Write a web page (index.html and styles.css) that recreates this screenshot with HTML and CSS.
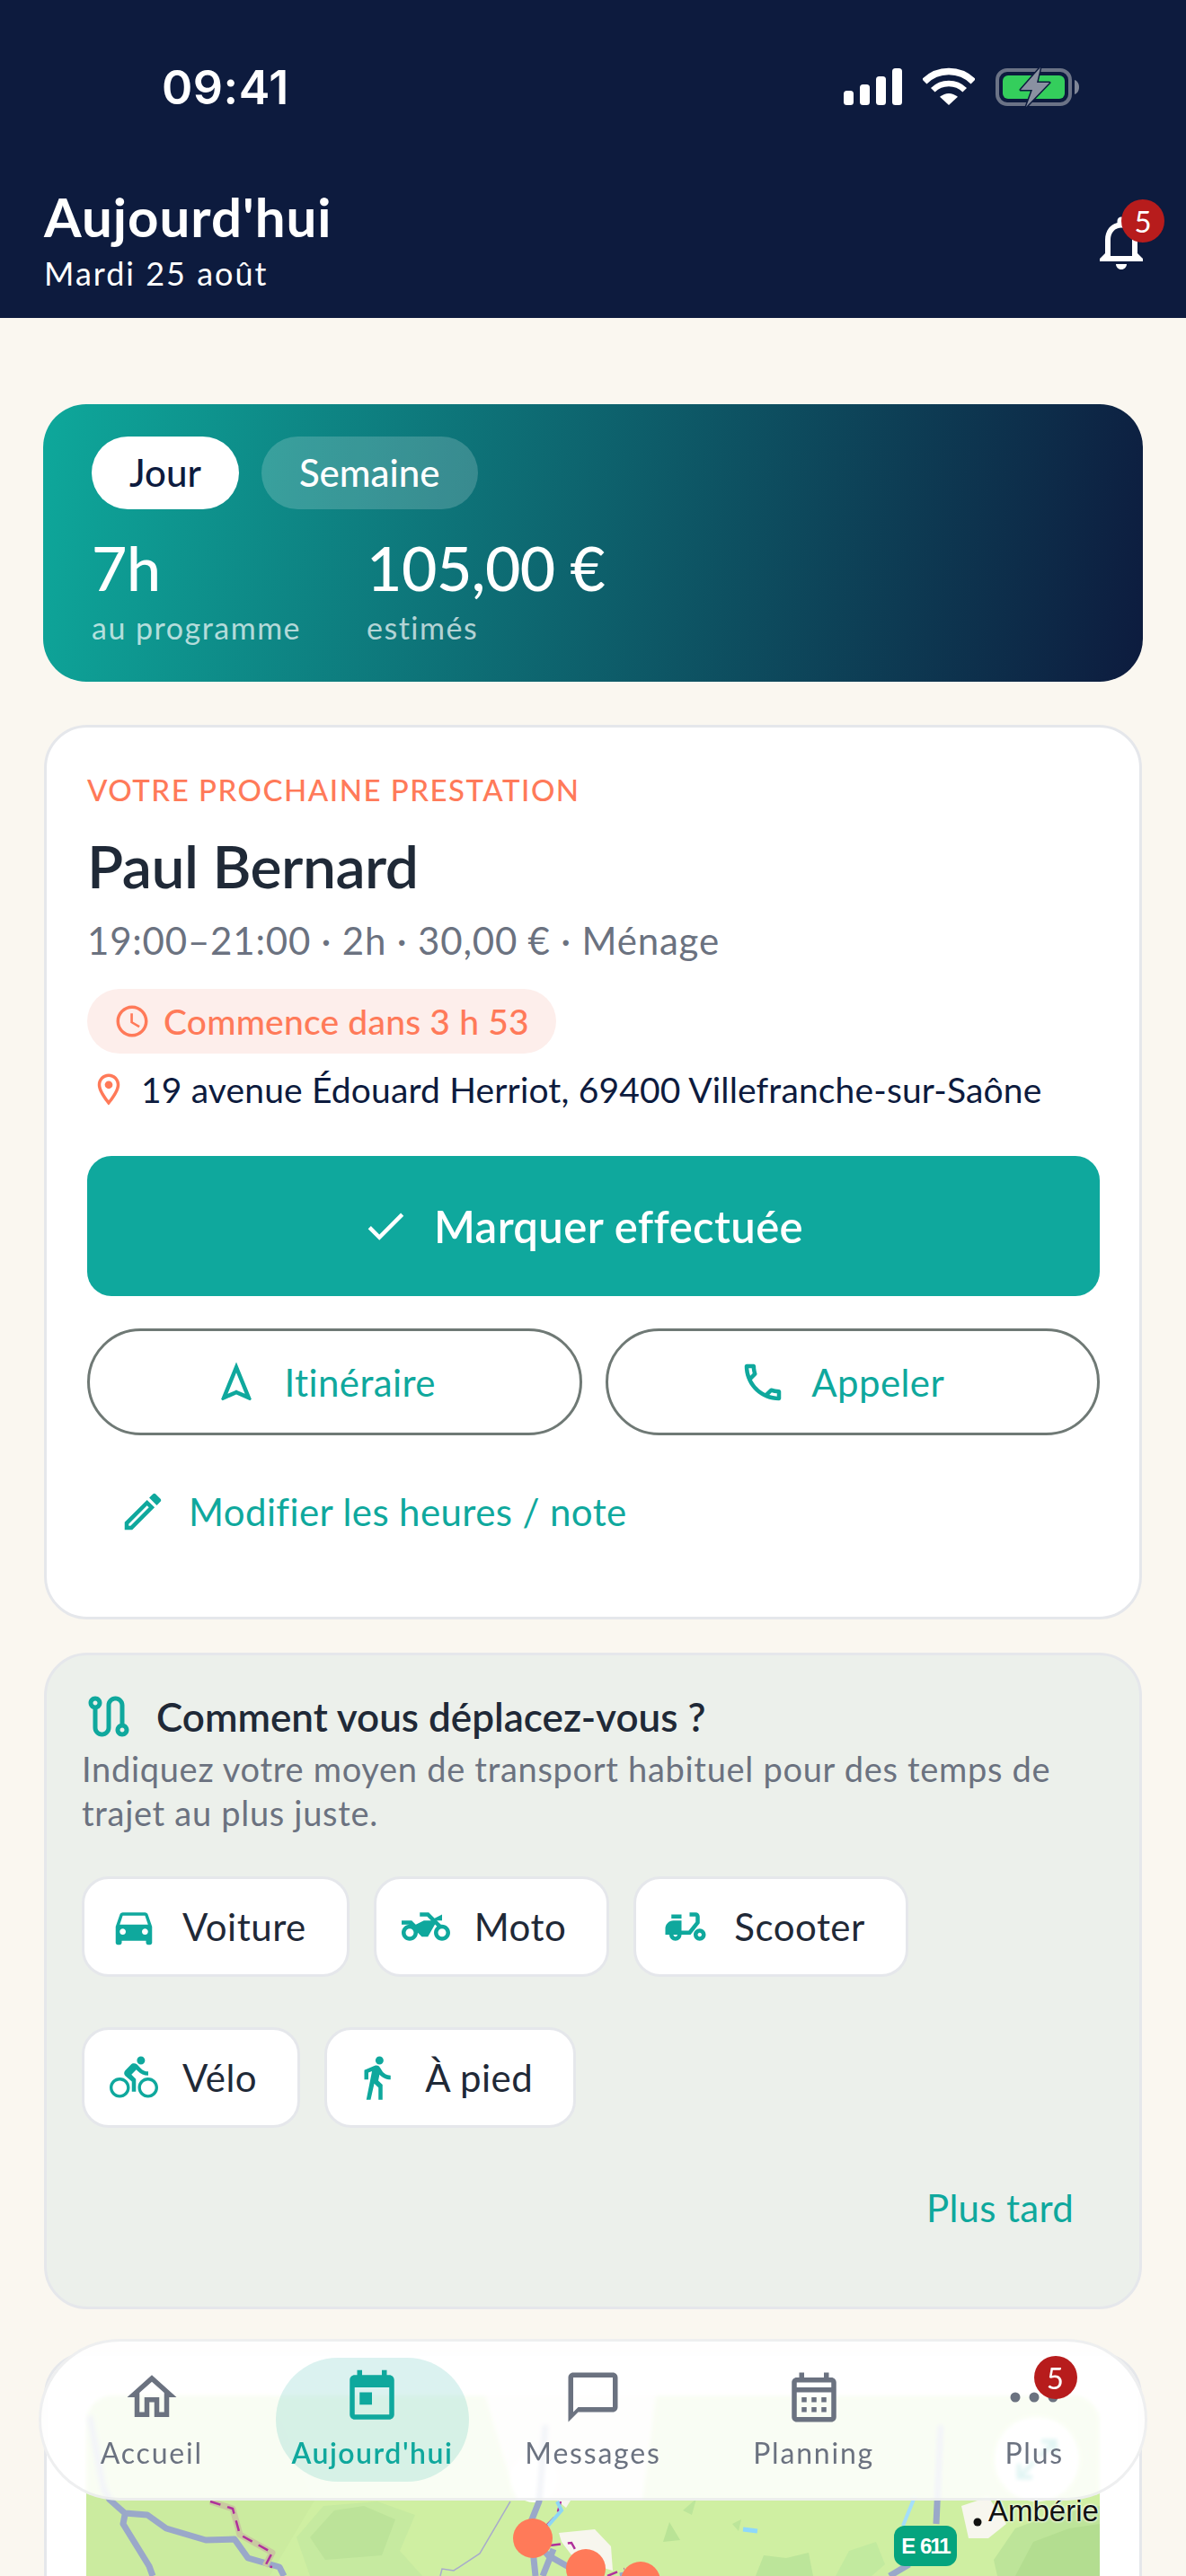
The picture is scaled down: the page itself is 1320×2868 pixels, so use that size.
FILE: index.html
```html
<!DOCTYPE html>
<html lang="fr">
<head>
<meta charset="utf-8">
<title>Aujourd'hui</title>
<link rel="stylesheet" href="styles.css">
</head>
<body>
<div class="screen">
  <header class="header">
    <div class="status">
      <span class="time">09:41</span>
      <div class="status-icons">
        <svg class="signal" width="65" height="41" viewBox="0 0 65 41" fill="#fff"><rect x="0" y="25" width="11" height="16" rx="3.5"/><rect x="18" y="18" width="11" height="23" rx="3.5"/><rect x="36" y="9" width="11" height="32" rx="3.5"/><rect x="54" y="0" width="11" height="41" rx="3.5"/></svg>
        <svg class="wifi" width="58" height="43" viewBox="0 0 58 43" fill="none" stroke="#fff"><path d="M1.8 15.8A38.500 38.500 0 0 1 56.200 15.800" stroke-width="7.500"/><path d="M11.300 25.300A25 25 0 0 1 46.700 25.300" stroke-width="6.500"/><path d="M29 42L19 32.800Q29 25 39 32.800Z" fill="#fff" stroke="none"/></svg>
        <svg class="battery" width="94" height="44" viewBox="0 0 94 44"><rect x="2" y="3" width="81" height="38" rx="11" fill="none" stroke="#6B7386" stroke-width="4"/><rect x="8" y="9" width="69" height="26" rx="6" fill="#34CE5C"/><path d="M88 14c3 1 5 4 5 8s-2 7-5 8z" fill="#7F8697"/><path d="M50 0L28 25h13l-7 19 26-27H46z" fill="#8A91A1" stroke="#0D1B3E" stroke-width="3" stroke-linejoin="round" paint-order="stroke"/></svg>
      </div>
    </div>
    <div class="title-row">
      <div class="titles">
        <h1 class="title">Aujourd'hui</h1>
        <p class="subtitle">Mardi 25 août</p>
      </div>
      <div class="bell">
        <svg width="72" height="72" viewBox="0 0 24 24" fill="#fff"><path d="M12 22c1.100 0 2-.9 2-2h-4c0 1.100.9 2 2 2zm6-6v-5c0-3.070-1.630-5.640-4.500-6.320V4c0-.83-.67-1.500-1.500-1.500s-1.500.67-1.500 1.500v.68C7.640 5.360 6 7.920 6 11v5l-2 2v1h16v-1l-2-2zm-2 1H8v-6c0-2.480 1.510-4.500 4-4.500s4 2.020 4 4.500v6z"/></svg>
        <span class="badge badge-bell">5</span>
      </div>
    </div>
  </header>

  <main class="main">
    <section class="hero">
      <div class="tabs">
        <span class="tab tab-on">Jour</span>
        <span class="tab tab-off">Semaine</span>
      </div>
      <div class="stats">
        <div class="stat stat-hours"><div class="stat-value">7h</div><div class="stat-label">au programme</div></div>
        <div class="stat"><div class="stat-value">105,00 €</div><div class="stat-label">estimés</div></div>
      </div>
    </section>

    <section class="card next">
      <div class="eyebrow">VOTRE PROCHAINE PRESTATION</div>
      <h2 class="name">Paul Bernard</h2>
      <p class="meta">19:00–21:00 · 2h · 30,00 € · Ménage</p>
      <div class="countdown">
        <svg width="42" height="42" viewBox="0 0 24 24" fill="#FF7A59"><path d="M11.990 2C6.470 2 2 6.480 2 12s4.470 10 9.990 10C17.520 22 22 17.520 22 12S17.520 2 11.990 2zM12 20c-4.420 0-8-3.580-8-8s3.580-8 8-8 8 3.580 8 8-3.580 8-8 8zm.5-13H11v6l5.250 3.150.75-1.230-4.500-2.670z"/></svg>
        <span>Commence dans 3 h 53</span>
      </div>
      <div class="address">
        <svg width="42" height="42" viewBox="0 0 24 24" fill="#FF7A59"><path d="M12 2C8.130 2 5 5.130 5 9c0 5.250 7 13 7 13s7-7.750 7-13c0-3.870-3.130-7-7-7zM7 9c0-2.760 2.240-5 5-5s5 2.240 5 5c0 2.880-2.880 7.190-5 9.880C9.920 16.210 7 11.850 7 9z"/><circle cx="12" cy="9" r="2.500"/></svg>
        <span>19 avenue Édouard Herriot, 69400 Villefranche-sur-Saône</span>
      </div>
      <button class="primary">
        <svg width="54" height="54" viewBox="0 0 24 24" fill="#fff"><path d="M9 16.170L4.830 12l-1.420 1.410L9 19 21 7l-1.410-1.410z"/></svg>
        <span>Marquer effectuée</span>
      </button>
      <div class="actions">
        <button class="outline">
          <svg width="54" height="54" viewBox="0 0 24 24" fill="#0FA89D"><path d="M12 7.270l4.280 10.430-3.470-1.530-.81-.36-.81.36-3.470 1.530L12 7.270M12 2L4.500 20.290l.71.71L12 18l6.790 3 .71-.71L12 2z"/></svg>
          <span>Itinéraire</span>
        </button>
        <button class="outline">
          <svg width="54" height="54" viewBox="0 0 24 24" fill="#0FA89D"><path d="M6.540 5c.06.89.21 1.760.45 2.590l-1.200 1.200c-.41-1.200-.67-2.470-.76-3.790h1.510m9.860 12.020c.85.24 1.720.39 2.600.45v1.490c-1.320-.09-2.590-.35-3.800-.75l1.200-1.190M7.500 3H4c-.55 0-1 .45-1 1 0 9.390 7.610 17 17 17 .55 0 1-.45 1-1v-3.490c0-.55-.45-1-1-1-1.240 0-2.450-.2-3.570-.57-.1-.04-.21-.05-.31-.05-.26 0-.51.1-.71.29l-2.200 2.200c-2.830-1.450-5.150-3.760-6.590-6.590l2.200-2.200c.28-.28.36-.67.25-1.020C8.700 6.450 8.500 5.250 8.500 4c0-.55-.45-1-1-1z"/></svg>
          <span>Appeler</span>
        </button>
      </div>
      <div class="edit">
        <svg width="54" height="54" viewBox="0 0 24 24" fill="#0FA89D"><path d="M14.060 9.020l.92.92L5.920 19H5v-.92l9.060-9.060M17.660 3c-.25 0-.51.1-.7.29l-1.830 1.830 3.750 3.750 1.830-1.830c.39-.39.39-1.020 0-1.410l-2.340-2.340c-.2-.2-.45-.29-.71-.29zm-3.600 3.190L3 17.250V21h3.750L17.810 9.940l-3.750-3.750z"/></svg>
        <span>Modifier les heures / note</span>
      </div>
    </section>

    <section class="transport">
      <div class="transport-head">
        <svg width="60" height="60" viewBox="0 0 24 24" fill="#0FA89D"><path d="M19 15.180V7c0-2.210-1.790-4-4-4s-4 1.790-4 4v10c0 1.100-.9 2-2 2s-2-.9-2-2V8.820C8.160 8.400 9 7.300 9 6c0-1.660-1.340-3-3-3S3 4.340 3 6c0 1.300.84 2.400 2 2.820V17c0 2.210 1.790 4 4 4s4-1.790 4-4V7c0-1.100.9-2 2-2s2 .9 2 2v8.180c-1.160.41-2 1.510-2 2.820 0 1.660 1.340 3 3 3s3-1.340 3-3c0-1.300-.84-2.400-2-2.820zM6 7c-.55 0-1-.45-1-1s.45-1 1-1 1 .45 1 1-.45 1-1 1zm12 12c-.55 0-1-.45-1-1s.45-1 1-1 1 .45 1 1-.45 1-1 1z"/></svg>
        <h3 class="transport-title">Comment vous déplacez-vous ?</h3>
      </div>
      <p class="transport-desc">Indiquez votre moyen de transport habituel pour des temps de trajet au plus juste.</p>
      <div class="chips">
        <div class="chip"><svg width="54" height="54" viewBox="0 0 24 24" fill="#0FA89D"><path d="M18.920 6.010C18.720 5.420 18.160 5 17.500 5h-11c-.66 0-1.210.42-1.420 1.010L3 12v8c0 .55.45 1 1 1h1c.55 0 1-.45 1-1v-1h12v1c0 .55.45 1 1 1h1c.55 0 1-.45 1-1v-8l-2.080-5.990zM6.500 16c-.83 0-1.500-.67-1.500-1.500S5.670 13 6.500 13s1.500.67 1.500 1.500S7.330 16 6.500 16zm11 0c-.83 0-1.500-.67-1.500-1.500s.67-1.500 1.500-1.500 1.500.67 1.500 1.500-.67 1.500-1.500 1.500zM5 11l1.500-4.500h11L19 11H5z"/></svg><span>Voiture</span></div>
        <div class="chip"><svg width="54" height="54" viewBox="0 0 24 24" fill="#0FA89D"><path d="M20 11c-.18 0-.36.03-.53.05L17.410 9H20V6l-3.720 1.860L13.410 5H9v2h3.590l2 2H11l-4 2-2-2H0v2h4c-2.210 0-4 1.790-4 4s1.790 4 4 4 4-1.790 4-4l2 2h3l3.490-6.100 1.010 1.010c-.91.73-1.500 1.840-1.500 3.090 0 2.210 1.790 4 4 4s4-1.790 4-4-1.790-4-4-4zM4 17c-1.100 0-2-.9-2-2s.9-2 2-2 2 .9 2 2-.9 2-2 2zm16 0c-1.100 0-2-.9-2-2s.9-2 2-2 2 .9 2 2-.9 2-2 2z"/></svg><span>Moto</span></div>
        <div class="chip"><svg width="54" height="54" viewBox="0 0 24 24" fill="#0FA89D"><path d="M19 7c0-1.100-.9-2-2-2h-3v2h3v2.650L13.520 14H10V9H6c-2.210 0-4 1.790-4 4v3h2c0 1.660 1.340 3 3 3s3-1.340 3-3h4.480L19 10.350V7zM7 17c-.55 0-1-.45-1-1h2c0 .55-.45 1-1 1zM5 6h5v2H5zm14 7c-1.660 0-3 1.340-3 3s1.340 3 3 3 3-1.340 3-3-1.340-3-3-3zm0 4c-.55 0-1-.45-1-1s.45-1 1-1 1 .45 1 1-.45 1-1 1z"/></svg><span>Scooter</span></div>
        <div class="chip"><svg width="54" height="54" viewBox="0 0 24 24" fill="#0FA89D"><path d="M15.500 5.500c1.100 0 2-.9 2-2s-.9-2-2-2-2 .9-2 2 .9 2 2 2zM5 12c-2.800 0-5 2.200-5 5s2.200 5 5 5 5-2.200 5-5-2.200-5-5-5zm0 8.500c-1.900 0-3.500-1.600-3.500-3.500s1.600-3.500 3.500-3.500 3.500 1.600 3.500 3.500-1.600 3.500-3.500 3.500zm5.800-10l2.400-2.400.8.8c1.300 1.300 3 2.100 5.100 2.100V9c-1.500 0-2.700-.6-3.600-1.500l-1.900-1.900c-.5-.4-1-.6-1.600-.6s-1.100.2-1.400.6L7.800 8.400c-.4.4-.6.9-.6 1.400 0 .6.2 1.100.6 1.400L11 14v5h2v-6.200l-2.200-2.300zM19 12c-2.800 0-5 2.200-5 5s2.200 5 5 5 5-2.200 5-5-2.200-5-5-5zm0 8.500c-1.900 0-3.500-1.600-3.500-3.500s1.600-3.500 3.500-3.500 3.500 1.600 3.500 3.500-1.600 3.500-3.500 3.500z"/></svg><span>Vélo</span></div>
        <div class="chip"><svg width="54" height="54" viewBox="0 0 24 24" fill="#0FA89D"><path d="M13.500 5.500c1.100 0 2-.9 2-2s-.9-2-2-2-2 .9-2 2 .9 2 2 2zM9.800 8.900L7 23h2.100l1.800-8 2.100 2v6h2v-7.500l-2.100-2 .6-3C14.800 12 16.800 13 19 13v-2c-1.900 0-3.500-1-4.300-2.400l-1-1.600c-.4-.6-1-1-1.700-1-.3 0-.5.1-.8.1L6 8.300V13h2V9.600l1.800-.7"/></svg><span>À pied</span></div>
      </div>
      <div class="later">Plus tard</div>
    </section>

    <section class="card map-card">
      <div class="map">
        <svg class="map-art" width="1128" height="300" viewBox="96 2667 1128 300">
          <rect x="96" y="2667" width="1128" height="300" fill="#CFEFA2"/>
          <path d="M96 2667H300L350 2784L300 2868H96Z" fill="#CBEB9F"/>
          <path d="M345 2868L330 2825L360 2790L420 2785L462 2800L445 2840L470 2868Z" fill="#C6EAA0"/>
          <path d="M362 2850L345 2825L372 2795L405 2790L440 2805L425 2845Z" fill="#BCE399"/>
          <path d="M1106 2850L1130 2815L1170 2800L1224 2790V2868H1110Z" fill="#BDE499"/>
          <path d="M1130 2868L1150 2830L1190 2815L1224 2810V2868Z" fill="#B3DD90"/>
          <path d="M841 2868L850 2845L875 2848L900 2842L905 2868Z" fill="#BCE59A"/>
          <path d="M930 2868L945 2840L975 2830L985 2855L970 2868Z" fill="#C2EA9F"/>
          <path d="M738 2830L745 2808L757 2828Z" fill="#B9E396"/>
          <path d="M760 2795L775 2782L770 2800Z" fill="#BCE59A"/>
          <path d="M815 2810L825 2805L822 2818Z" fill="#BCE59A"/>
          <path d="M540 2667H730L715 2784H575Z" fill="#F7F1EC"/>
          <path d="M622 2820L662 2816L680 2835L682 2862L640 2850L625 2830Z" fill="#F7F6EE"/>
          <path d="M620 2784H635L630 2792Z" fill="#F7F6EE"/>
          <path d="M1070 2790L1100 2780L1120 2810L1100 2826L1078 2826Z" fill="#F7F6EE"/>
          <circle cx="594" cy="2760" r="26" fill="#fff"/>
          <path d="M568 2785L534 2843L505 2862L492 2860L490 2868" fill="none" stroke="#A8ABCB" stroke-width="1.500"/>
          <g fill="none" stroke="#9AA8C9" stroke-width="7" stroke-linejoin="round">
            <path d="M100 2690L115 2770L122 2783L139 2798L164 2800L185 2815L229 2828L261 2827L276 2848L311 2858L316 2868"/>
            <path d="M139 2800L137 2810L166 2857L170 2868"/>
            <path d="M607 2700L600 2785L590 2810L596 2868"/>
            <path d="M592 2825L610 2845L640 2862"/>
            <path d="M616 2838L604 2868"/>
            <path d="M1047 2700L1042 2810"/>
            <path d="M1012 2855L990 2868"/>
            <path d="M690 2868L720 2862"/>
          </g>
          <g fill="none" stroke="#C9C9A0" stroke-width="7" stroke-linejoin="round"><path d="M234 2785L259 2793L267 2822L303 2842L295 2857"/></g>
          <g fill="none" stroke="#B0309B" stroke-width="2.500" stroke-dasharray="12 8"><path d="M234 2785L259 2793L267 2822L303 2842L295 2857L303 2858"/><path d="M624 2785L620 2800L608 2812"/><path d="M612 2834L636 2831L644 2845"/><path d="M676 2868L695 2860"/></g>
          <path d="M1018 2780L1005 2812" fill="none" stroke="#A3DEFB" stroke-width="4"/>
          <path d="M620 2785L625 2795L610 2812" fill="none" stroke="#8DD6F5" stroke-width="4"/>
          <path d="M827 2816L843 2818" stroke="#8ED8FB" stroke-width="5"/>
          <circle cx="593" cy="2826" r="22" fill="#FF7A59"/>
          <circle cx="652" cy="2860" r="22" fill="#FF7A59"/>
          <circle cx="713" cy="2874" r="22" fill="#FF7A59"/>
          <circle cx="1088" cy="2808" r="4.500" fill="#111"/>
        </svg>
        <span class="map-control"><svg width="60" height="60" viewBox="0 0 24 24" fill="#0FA89D"><path d="M14 3h7v7h-2V6.400l-5 5-1.400-1.400 5-5H14zM10 21H3v-7h2v3.600l5-5 1.400 1.400-5 5H10z"/></svg></span>
        <span class="map-city">Ambérie</span>
        <span class="map-road">E 611</span>
      </div>
    </section>
  </main>

  <nav class="nav">
    <a class="nav-item">
      <svg width="66" height="66" viewBox="0 0 24 24" fill="#6B7280"><path d="M12 5.690l5 4.500V18h-2v-6H9v6H7v-7.810l5-4.500M12 3L2 12h3v8h6v-6h2v6h6v-8h3L12 3z"/></svg>
      <span>Accueil</span>
    </a>
    <a class="nav-item nav-active">
      <svg width="66" height="66" viewBox="0 0 24 24" fill="#0FA89D"><path d="M19 3h-1V1h-2v2H8V1H6v2H5c-1.110 0-1.990.9-1.990 2L3 19c0 1.100.89 2 2 2h14c1.100 0 2-.9 2-2V5c0-1.100-.9-2-2-2zm0 16H5V8h14v11zM7 10h5v5H7z"/></svg>
      <span>Aujourd'hui</span>
    </a>
    <a class="nav-item">
      <svg width="66" height="66" viewBox="0 0 24 24" fill="#6B7280"><path d="M20 2H4c-1.100 0-2 .9-2 2v18l4-4h14c1.100 0 2-.9 2-2V4c0-1.100-.9-2-2-2zm0 14H6l-2 2V4h16v12z"/></svg>
      <span>Messages</span>
    </a>
    <a class="nav-item">
      <svg width="66" height="66" viewBox="0 0 24 24" fill="#6B7280"><path d="M19 4h-1V2h-2v2H8V2H6v2H5c-1.100 0-2 .9-2 2v14c0 1.100.9 2 2 2h14c1.100 0 2-.9 2-2V6c0-1.100-.9-2-2-2zm0 16H5V10h14v10zm0-12H5V6h14v2zM9 14H7v-2h2v2zm4 0h-2v-2h2v2zm4 0h-2v-2h2v2zm-8 4H7v-2h2v2zm4 0h-2v-2h2v2zm4 0h-2v-2h2v2z"/></svg>
      <span>Planning</span>
    </a>
    <a class="nav-item">
      <span class="more">
        <svg width="66" height="66" viewBox="0 0 66 66" fill="#6B7280"><circle cx="12" cy="33" r="5.500"/><circle cx="33" cy="33" r="5.500"/><circle cx="54" cy="33" r="5.500"/></svg>
        <span class="badge badge-more">5</span>
      </span>
      <span>Plus</span>
    </a>
  </nav>
</div>
</body>
</html>
```

FILE: styles.css
```css
* { box-sizing: border-box; margin: 0; padding: 0; }
html, body { width: 1320px; height: 2868px; overflow: hidden; background: #FAF7F0; }
body { font-family: "Lato", "Noto Sans", sans-serif; color: #1F2937; }
svg { display: block; flex: none; }
.screen { position: relative; width: 1320px; height: 2868px; overflow: hidden; }

.header { height: 354px; background: #0D1B3E; color: #fff; display: flex; flex-direction: column; }
.status { height: 195px; padding: 75px 118px 0 180px; display: flex; justify-content: space-between; align-items: flex-start; }
.time { font-size: 52px; line-height: 46px; font-weight: 600; font-family: "Inter", sans-serif; letter-spacing: .5px; }
.status-icons { display: flex; align-items: flex-start; gap: 23px; }
.signal { margin-top: 1px; }
.title-row { display: flex; justify-content: space-between; padding: 0 36px 0 49px; }
.title { font-size: 60px; line-height: 76px; font-weight: 700; letter-spacing: 1px; margin-top: 8px; }
.subtitle { font-size: 36px; line-height: 44px; letter-spacing: 2px; margin-top: 3px; }
.bell { position: relative; width: 72px; height: 72px; margin-top: 39px; }
.badge { position: absolute; width: 48px; height: 48px; border-radius: 50%; background: #B71C1C; color: #fff; font-size: 33px; line-height: 48px; text-align: center; }
.badge-bell { left: 36px; top: -12px; }
.badge-more { left: 33px; top: -13px; }

.main { padding: 96px 48px 0; display: flex; flex-direction: column; }
.hero { height: 309px; border-radius: 48px; padding: 36px 54px 0; background: linear-gradient(100deg, #0EA89B 0%, #0D1B3E 100%); color: #fff; }
.tabs { display: flex; gap: 25px; }
.tab { height: 81px; border-radius: 41px; font-size: 42px; line-height: 81px; font-weight: 500; padding: 0 42px; }
.tab-on { background: #fff; color: #0D1B3E; }
.tab-off { background: rgba(255,255,255,.18); }
.stats { display: flex; margin-top: 23px; }
.stat-hours { width: 306px; }
.stat-value { font-size: 68px; line-height: 84px; font-weight: 500; letter-spacing: -.5px; }
.stat-label { font-size: 34px; line-height: 40px; letter-spacing: 1.500px; color: rgba(255,255,255,.7); margin-top: 5px; }

.card { background: #fff; border: 3px solid #E5E7EB; border-radius: 48px; }
.next { margin: 48px 1px 0; height: 996px; padding: 49px 44px 0 45px; }
.eyebrow { font-size: 33px; line-height: 40px; letter-spacing: 1.500px; color: #FF7A59; font-weight: 500; }
.name { font-size: 66px; line-height: 80px; font-weight: 600; letter-spacing: -.5px; margin-top: 25px; color: #1F2937; }
.meta { font-size: 42px; line-height: 56px; letter-spacing: .8px; margin-top: 15px; color: #6B7280; }
.countdown { display: inline-flex; align-items: center; gap: 14px; height: 72px; border-radius: 36px; background: #FDEEEB; color: #FF7A59; font-size: 39px; letter-spacing: .2px; padding: 0 30px 0 29px; margin-top: 26px; font-weight: 500; }
.address { display: flex; align-items: center; gap: 15px; font-size: 39px; line-height: 48px; letter-spacing: .15px; margin: 16px 0 0 3px; color: #0D1B3E; }
.primary { width: 100%; height: 156px; margin-top: 50px; border: 0; border-radius: 27px; background: #0FA89D; color: #fff; font: inherit; font-size: 49px; letter-spacing: .4px; font-weight: 600; display: flex; align-items: center; justify-content: center; gap: 27px; padding-right: 25px; }
.actions { display: flex; gap: 26px; margin-top: 36px; }
.outline { flex: 1; height: 119px; border: 3px solid #6F7975; border-radius: 60px; background: #fff; color: #0FA89D; font: inherit; font-size: 42px; letter-spacing: .4px; display: flex; align-items: center; justify-content: center; gap: 27px; padding-right: 24px; }
.edit { display: flex; align-items: center; gap: 24px; color: #0FA89D; font-size: 42px; letter-spacing: .4px; height: 90px; margin: 40px 0 0 35px; }

.transport { margin: 37px 1px 0; height: 731px; border: 3px solid #E5E7EB; border-radius: 48px; background: #ECF0EB; padding: 38px 0 0 39px; }
.transport-head { display: flex; align-items: center; gap: 23px; }
.transport-title { font-size: 44px; line-height: 60px; font-weight: 600; color: #1F2937; }
.transport-desc { font-size: 38px; line-height: 49px; letter-spacing: .7px; color: #6B7280; width: 1133px; margin-top: 4px; }
.chips { display: flex; flex-wrap: wrap; gap: 56px 27px; margin-top: 46px; }
.chip { height: 112px; background: #fff; border: 3px solid #E5E7EB; border-radius: 30px; display: flex; align-items: center; gap: 27px; padding: 0 45px 0 28px; font-size: 42px; letter-spacing: .5px; }
.later { text-align: right; padding-right: 73px; color: #0FA89D; font-size: 42px; letter-spacing: .3px; line-height: 60px; margin-top: 59px; }

.map-card { margin: 48px 1px 0; height: 600px; padding: 45px 44px 0; }
.map { position: relative; height: 500px; border-radius: 30px; overflow: hidden; background: #CFEFA2; }
.map-control { position: absolute; left: 1011px; top: 24px; width: 94px; height: 94px; border-radius: 50%; background: #fff; display: flex; align-items: center; justify-content: center; }
.map-city { position: absolute; left: 1004px; top: 111px; font-family: "Liberation Sans", sans-serif; font-size: 33px; line-height: 36px; color: #111; text-shadow: 0 0 3px #fff, 0 0 3px #fff; }
.map-road { position: absolute; left: 899px; top: 145px; width: 70px; height: 45px; border-radius: 12px; background: #05A47E; color: #fff; font-family: "Liberation Sans", sans-serif; font-weight: 700; font-size: 24px; letter-spacing: -2px; word-spacing: 2px; line-height: 45px; text-align: center; white-space: nowrap; }

.nav { position: absolute; left: 43px; top: 2604px; width: 1234px; height: 180px; border: 3px solid rgba(226,228,230,.6); border-radius: 90px; background: rgba(255,255,255,.88); backdrop-filter: blur(2px); display: grid; grid-template-columns: repeat(5, 1fr); }
.nav-item { height: 138px; margin: 18px 15px 0; border-radius: 69px; padding-top: 11px; display: flex; flex-direction: column; align-items: center; gap: 9px; color: #6B7280; font-size: 32px; line-height: 40px; letter-spacing: 1.800px; }
.nav-active { background: rgba(15,168,157,.15); color: #0FA89D; font-weight: 600; letter-spacing: 1.500px; }
.more { position: relative; width: 66px; height: 66px; }
```
